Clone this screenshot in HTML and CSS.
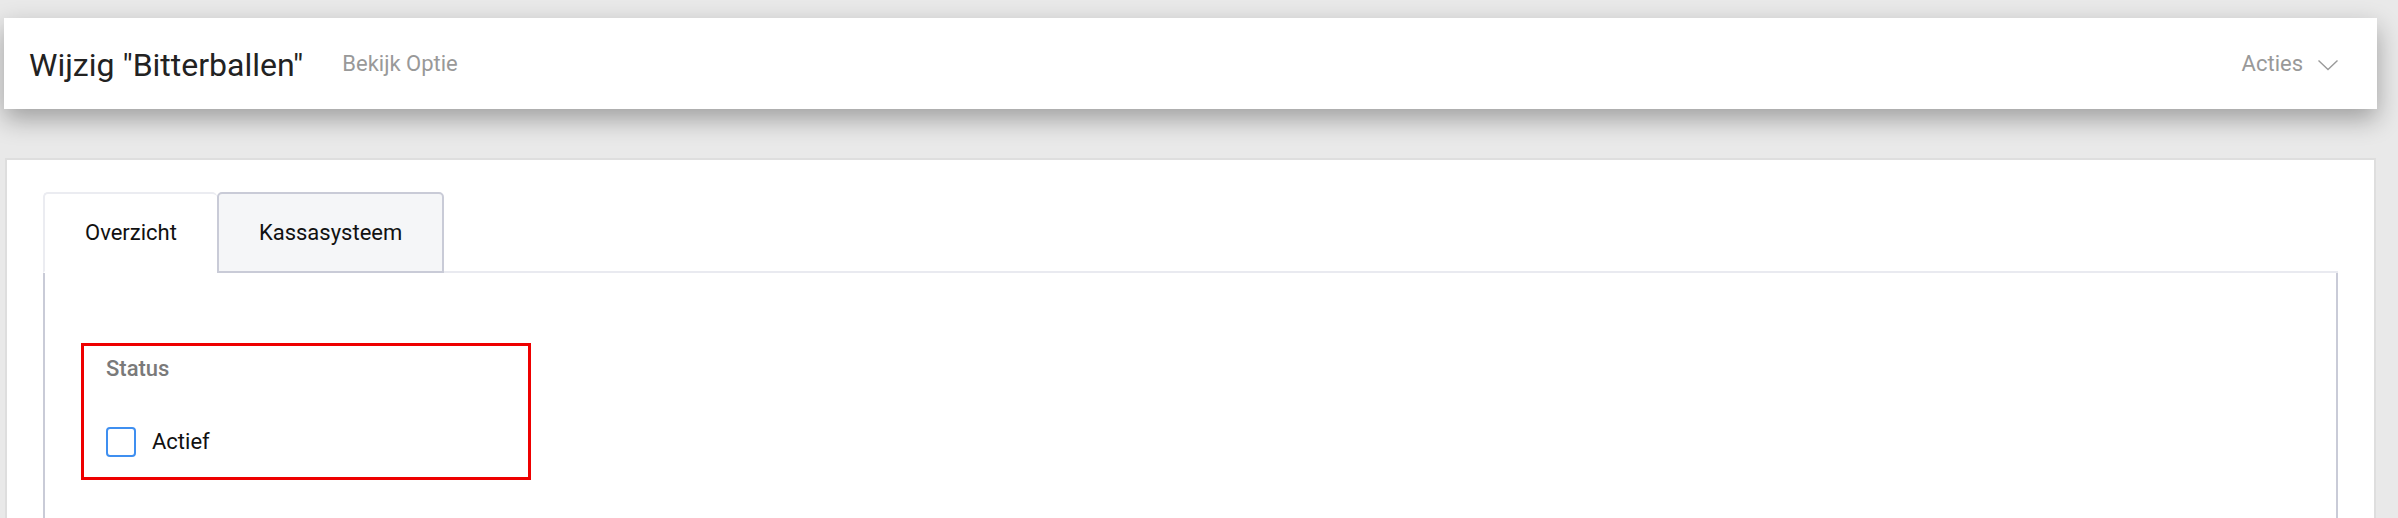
FILE: index.html
```html
<!DOCTYPE html>
<html lang="nl">
<head>
<meta charset="utf-8">
<title>Wijzig Bitterballen</title>
<link rel="stylesheet" href="styles.css">
</head>
<body>
<header class="page-header">
  <div class="header-left">
    <h1 class="title">Wijzig "Bitterballen"</h1>
    <a class="subtitle-link">Bekijk Optie</a>
  </div>
  <div class="actions">
    <span class="actions-label">Acties</span>
    <svg class="chevron" width="22" height="12" viewBox="0 0 22 12"><polyline points="1.5,1.5 11,10.5 20.5,1.5" fill="none" stroke="#9a9a9a" stroke-width="1.4"/></svg>
  </div>
</header>
<main class="card">
  <nav class="tabs">
    <div class="tab tab-active">Overzicht</div>
    <div class="tab">Kassasysteem</div>
  </nav>
  <section class="panel">
    <div class="status-box">
      <div class="status-label">Status</div>
      <label class="check-row">
        <span class="checkbox"></span>
        <span class="check-text">Actief</span>
      </label>
    </div>
  </section>
</main>
</body>
</html>
```

FILE: styles.css
```css
* { box-sizing: border-box; }
html, body { margin: 0; padding: 0; }
body {
  background: #e9e9e9;
  font-family: Roboto, "Liberation Sans", Arial, sans-serif;
  height: 518px;
  overflow: hidden;
}
.page-header {
  margin: 18px 21px 0 4px;
  height: 91px;
  background: #fff;
  box-shadow: 0 10px 24px rgba(0,0,0,0.32);
  display: flex;
  align-items: center;
  justify-content: space-between;
  padding: 0 38px 0 25px;
  position: relative;
  z-index: 1;
}
.header-left { display: flex; align-items: center; }
.title {
  margin: 3px 0 0 0;
  font-size: 32px;
  font-weight: 400;
  color: #222;
}
.subtitle-link {
  margin-left: 39px;
  font-size: 22px;
  color: #999;
}
.actions { display: flex; align-items: center; gap: 14px; }
.actions-label { font-size: 22px; color: #999; }
.chevron { display: block; margin-top: 2px; }

.card {
  margin: 49px 22px 0 5px;
  background: #fff;
  border: 2px solid #dedede;
  padding: 32px 36px 0 36px;
  height: 400px;
}
.tabs {
  display: flex;
  border-bottom: 2px solid #e9eaf0;
}
.tab {
  height: 81px;
  margin-bottom: -2px;
  padding: 0 40px;
  display: flex;
  align-items: center;
  font-size: 22px;
  color: #111;
  border: 2px solid #c9cbd7;
  border-radius: 5px 5px 0 0;
  background: #f5f6f8;
}
.tab-active {
  background: #fff;
  border-color: #ebecf1;
  border-bottom-color: #fff;
  border-right: none;
}
.panel {
  border-left: 2px solid #c9cbd7;
  border-right: 2px solid #c9cbd7;
  height: 300px;
  padding: 70px 0 0 36px;
}
.status-box {
  width: 450px;
  height: 137px;
  border: 3px solid #ee0000;
  padding: 10px 0 0 22px;
}
.status-label {
  font-size: 22px;
  font-weight: 500;
  color: #7a7a7a;
  line-height: 26px;
  margin-bottom: 45px;
}
.check-row { display: flex; align-items: center; gap: 16px; }
.checkbox {
  width: 30px;
  height: 30px;
  border: 2px solid #3f8ff0;
  border-radius: 4px;
  background: #fff;
}
.check-text { font-size: 22px; color: #111; margin-top: -2px; }
```
